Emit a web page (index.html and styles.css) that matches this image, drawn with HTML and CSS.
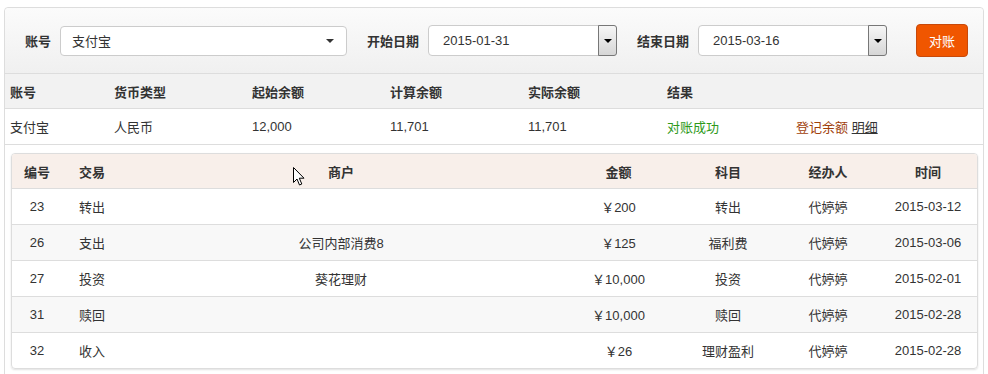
FILE: index.html
```html
<!DOCTYPE html>
<html lang="zh-CN">
<head>
<meta charset="UTF-8">
<title>对账</title>
<link rel="stylesheet" href="styles.css">
</head>
<body>

<div class="frame">
  <form class="filter">
    <label class="filter-label">账号</label>
    <div class="select">
      <span>支付宝</span>
      <span class="caret"></span>
    </div>

    <label class="filter-label">开始日期</label>
    <div class="date">
      <span class="date-text">2015-01-31</span>
      <span class="spin"><span class="caret"></span></span>
    </div>

    <label class="filter-label">结束日期</label>
    <div class="date">
      <span class="date-text">2015-03-16</span>
      <span class="spin"><span class="caret"></span></span>
    </div>

    <button type="button" class="button">对账</button>
  </form>

  <table class="summary">
    <colgroup>
      <col style="width:104px"><col style="width:138px"><col style="width:138px">
      <col style="width:138px"><col style="width:139px"><col style="width:129px"><col>
    </colgroup>
    <thead>
      <tr><th>账号</th><th>货币类型</th><th>起始余额</th><th>计算余额</th><th>实际余额</th><th>结果</th><th></th></tr>
    </thead>
    <tbody>
      <tr>
        <td>支付宝</td><td>人民币</td><td>12,000</td><td>11,701</td><td>11,701</td>
        <td class="ok">对账成功</td>
        <td><a class="register">登记余额</a> <a class="detail-link">明细</a></td>
      </tr>
    </tbody>
  </table>

  <div class="detail-wrap">
    <div class="panel">
      <table class="detail">
        <colgroup>
          <col style="width:50px"><col style="width:61px"><col style="width:436px">
          <col style="width:119px"><col style="width:100px"><col style="width:100px"><col style="width:100px">
        </colgroup>
        <thead>
          <tr><th>编号</th><th class="left">交易</th><th>商户</th><th>金额</th><th>科目</th><th>经办人</th><th>时间</th></tr>
        </thead>
        <tbody>
          <tr><td>23</td><td class="left">转出</td><td></td><td>￥200</td><td>转出</td><td>代婷婷</td><td>2015-03-12</td></tr>
          <tr><td>26</td><td class="left">支出</td><td>公司内部消费8</td><td>￥125</td><td>福利费</td><td>代婷婷</td><td>2015-03-06</td></tr>
          <tr><td>27</td><td class="left">投资</td><td>葵花理财</td><td>￥10,000</td><td>投资</td><td>代婷婷</td><td>2015-02-01</td></tr>
          <tr><td>31</td><td class="left">赎回</td><td></td><td>￥10,000</td><td>赎回</td><td>代婷婷</td><td>2015-02-28</td></tr>
          <tr><td>32</td><td class="left">收入</td><td></td><td>￥26</td><td>理财盈利</td><td>代婷婷</td><td>2015-02-28</td></tr>
        </tbody>
      </table>
      <svg class="cursor" width="13" height="20" viewBox="0 0 13 20">
        <path d="M0.5 0.5 L0.5 15.5 L4 12 L6.5 18 L8.8 17 L6.3 11.2 L11 11.2 Z" fill="#fff" stroke="#000" stroke-width="1"/>
      </svg>
    </div>
  </div>
</div>

</body>
</html>
```

FILE: styles.css
```css
body {
  margin: 0;
  padding: 7px 5px 0 4px;
  font-family: "Liberation Sans", Arial, "Noto Sans CJK SC", sans-serif;
  font-size: 13px;
  color: #333;
  background-color: #fff;
}

.frame {
  width: 978px;
  border: 1px solid #ddd;
  border-radius: 4px 4px 0 0;
  padding-bottom: 30px;
}

.filter {
  display: flex;
  align-items: center;
  height: 65px;
  padding-left: 20px;
  background: linear-gradient(#fbfbfb, #f0f0f0);
  border-bottom: 1px solid #ddd;
  border-radius: 4px 4px 0 0;
  margin: 0;
}

.filter-label {
  font-weight: bold;
  margin-right: 9px;
}

.select {
  border: 1px solid #ccc;
  border-radius: 4px;
  background-color: #fff;
  display: flex;
  align-items: center;
  justify-content: space-between;
  padding: 0 12px 0 11px;
  box-sizing: border-box;
  width: 287px;
  height: 30px;
  margin-right: 20px;
}

.caret {
  width: 0;
  height: 0;
  border-left: 4px solid transparent;
  border-right: 4px solid transparent;
  border-top: 4px solid #333;
}

.date {
  width: 189px;
  height: 31px;
  box-sizing: border-box;
  border: 1px solid #ccc;
  border-radius: 4px;
  background-color: #fff;
  display: flex;
  align-items: stretch;
  margin-right: 20px;
}

.date-text {
  flex: 1;
  padding-left: 14px;
  display: flex;
  align-items: center;
}

.spin {
  width: 17px;
  border: 1px solid #777;
  border-radius: 0 3px 3px 0;
  margin: -1px -1px -1px 0;
  background: linear-gradient(#f6f6f6, #d6d6d6);
  display: flex;
  align-items: center;
  justify-content: center;
}

.spin .caret {
  border-top-color: #000;
}

.button {
  margin-left: 9px;
  width: 52px;
  height: 33px;
  background-color: #f05600;
  border: 1px solid #c8490a;
  border-radius: 4px;
  color: #fff;
  font-family: inherit;
  font-size: 13px;
  padding: 0;
}

.summary {
  width: 100%;
  border-collapse: collapse;
  table-layout: fixed;
}

.summary th,
.summary td {
  text-align: left;
  padding: 0 0 0 5px;
  border-bottom: 1px solid #ddd;
}

.summary th {
  height: 34px;
  background-color: #f2f2f2;
  font-weight: bold;
}

.summary td {
  height: 35px;
}

.ok {
  color: #2e9a1a;
}

.register {
  color: #a0400a;
}

.detail-link {
  color: #333;
  text-decoration: underline;
}

.detail-wrap {
  padding: 8px 5px 0 6px;
}

.panel {
  position: relative;
  border: 1px solid #ddd;
  border-radius: 4px;
  box-shadow: 0 1px 2px rgba(0,0,0,0.12);
  overflow: hidden;
}

.detail {
  width: 100%;
  border-collapse: collapse;
  table-layout: fixed;
}

.detail th,
.detail td {
  text-align: center;
  padding: 0;
  height: 35px;
  border-top: 1px solid #ddd;
}

.detail th {
  border-top: none;
  height: 34px;
  background-color: #f8efea;
  font-weight: bold;
}

.detail tbody tr:nth-child(even) td {
  background-color: #f8f8f8;
}

.detail .left {
  text-align: left;
  padding-left: 17px;
}

.cursor {
  position: absolute;
  left: 281px;
  top: 13px;
}
```
